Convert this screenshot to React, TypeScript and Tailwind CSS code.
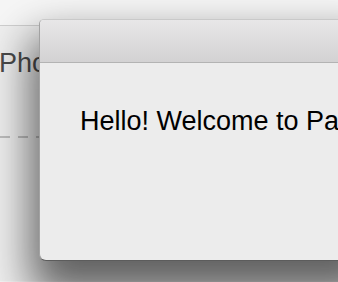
export default function App() {
  return (
    <div className="relative h-[282px] w-[338px] overflow-hidden bg-[#f6f6f6] font-['Liberation_Sans',Arial,sans-serif]">
      {/* window behind */}
      <div className="h-[26px] border-b border-[#cfcfcf] bg-[#f6f6f6]" />
      <div className="h-[255px] bg-[#efefef] pt-[22px]">
        <div className="-ml-[1px] whitespace-nowrap text-[27px] leading-[30px] text-[#4a4a4a]">
          Photos
        </div>
        <div className="mt-[58px] h-[2px] w-full bg-[repeating-linear-gradient(90deg,#bdbdbd_0_10px,transparent_10px_18px)]" />
      </div>

      {/* dialog */}
      <div className="absolute left-[39px] top-[19px] flex h-[242px] w-[330px] flex-col overflow-hidden rounded-t-[5px] rounded-b-[7px] border border-[#a2a2a2] border-b-[#5c5c5c] border-t-[#c9c9c9] bg-[#ececec] shadow-[0_26px_44px_8px_rgba(0,0,0,0.6)]">
        <div className="h-[43px] shrink-0 border-b border-[#b3b3b3] bg-gradient-to-b from-[#e8e7e8] to-[#d3d2d3]" />
        <div className="flex-1 pl-[40px] pt-[43px]">
          <div className="whitespace-nowrap text-[27px] leading-[30px] text-black">
            Hello! Welcome to Pages
          </div>
        </div>
      </div>
    </div>
  );
}
